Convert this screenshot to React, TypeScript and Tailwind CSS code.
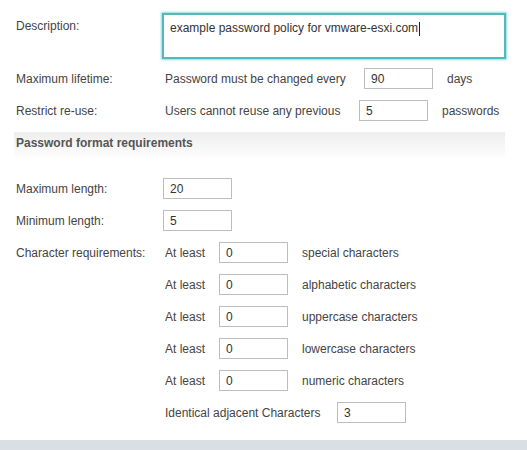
const font = "font-['Liberation_Sans',Arial,sans-serif]"

function Box({ value, width = "w-[69px]" }: { value: string; width?: string }) {
    return (
        <div className={`${width} h-[21px] border border-[#bdbdbd] bg-white pl-[6px] flex items-center text-[12px] text-[#333] shrink-0`}>
            {value}
        </div>
    )
}

function Row({ label, children, className = "" }: { label?: string; children: React.ReactNode; className?: string }) {
    return (
        <div className={`flex items-center h-[21px] ${className}`}>
            <div className="w-[146px] shrink-0">{label}</div>
            {children}
        </div>
    )
}

export default function App() {
    const chars = ["special", "alphabetic", "uppercase", "lowercase", "numeric"]

    return (
        <div className={`${font} w-[527px] h-[450px] bg-white text-[12px] text-[#444] flex flex-col overflow-hidden`}>
            <div className="pl-4 flex-1">
                <div className="flex mt-[13px]">
                    <div className="w-[146px] shrink-0 pt-[4px]">Description:</div>
                    <div className="w-[344px] h-[46px] border-2 border-[#55b8bb] shadow-[0_0_2px_1px_#8fdcdf] pl-[6px] pt-[4px] text-[#333]">
                        example password policy for vmware-esxi.com<span className="inline-block w-px h-[14px] bg-[#222] align-middle ml-px" />
                    </div>
                </div>

                <Row label="Maximum lifetime:" className="mt-[9px]">
                    <span className="ml-[3px] w-[199px]">Password must be changed every</span>
                    <Box value="90" />
                    <span className="ml-[14px]">days</span>
                </Row>

                <Row label="Restrict re-use:" className="mt-[11px]">
                    <span className="ml-[3px] w-[194px]">Users cannot reuse any previous</span>
                    <Box value="5" />
                    <span className="ml-[14px]">passwords</span>
                </Row>

                <div className="mt-[11px] -ml-[2px] w-[491px] h-[25px] bg-gradient-to-b from-[#eeeeee] to-[#fdfdfd] pl-[2px] pb-[4px] flex items-center font-bold text-[#555]">
                    Password format requirements
                </div>

                <Row label="Maximum length:" className="mt-[21px]">
                    <div className="ml-[1px]"><Box value="20" /></div>
                </Row>
                <Row label="Minimum length:" className="mt-[11px]">
                    <div className="ml-[1px]"><Box value="5" /></div>
                </Row>

                {chars.map((c, i) => (
                    <Row key={c} label={i === 0 ? "Character requirements:" : undefined} className="mt-[11px]">
                        <span className="ml-[3px] w-[54px]">At least</span>
                        <Box value="0" />
                        <span className="ml-[14px]">{c} characters</span>
                    </Row>
                ))}

                <Row className="mt-[11px]">
                    <span className="ml-[3px] w-[172px]">Identical adjacent Characters</span>
                    <Box value="3" />
                </Row>
            </div>
            <div className="h-[10px] bg-[#dadee5]" />
        </div>
    )
}
